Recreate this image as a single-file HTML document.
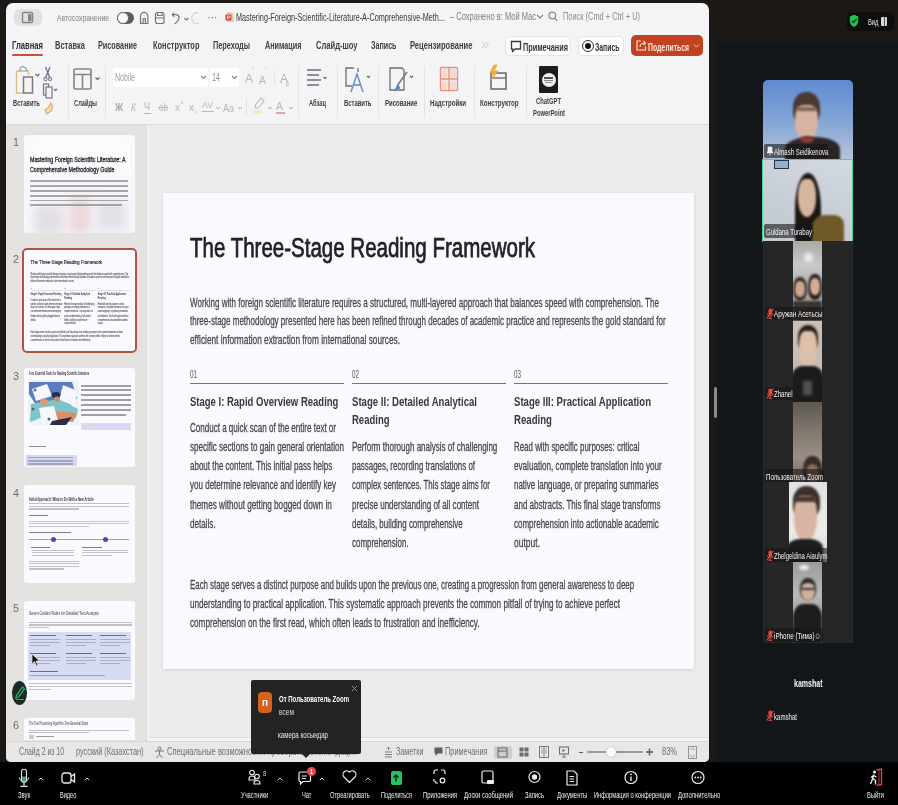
<!DOCTYPE html>
<html><head><meta charset="utf-8"><style>
*{margin:0;padding:0;box-sizing:border-box}
html,body{width:898px;height:805px;overflow:hidden;background:#14171a;font-family:"Liberation Sans",sans-serif}
.a{position:absolute}
.t{position:absolute;white-space:nowrap;transform-origin:0 0;line-height:normal}
</style></head><body>
<div class="a" style="left:0px;top:0px;width:898px;height:42px;background:#1b1815;"></div>
<div class="a" style="left:0px;top:0px;width:717px;height:762px;background:#1b1815;"></div>
<div class="a" style="left:6px;top:3px;width:703px;height:759px;background:#f4f3f5;border-radius:7px 7px 5px 5px"></div>
<div class="a" style="left:713.5px;top:387px;width:3px;height:31px;background:#8b8a88;border-radius:1.5px"></div>
<div class="a" style="left:847px;top:12px;width:47px;height:19px;background:#0e0e0e;border-radius:5px"></div>
<svg class="a" style="left:849px;top:14px;" width="10" height="14" viewBox="0 0 10 14" fill="none"><path d="M5 0.8 L9.2 2.5 V7 C9.2 10 7.2 12 5 13 C2.8 12 0.8 10 0.8 7 V2.5 Z" fill="#23c552"/><path d="M2.8 6.8 L4.5 8.5 L7.5 5" stroke="#0b3d18" stroke-width="1.3"/></svg>
<div class="t" style="left:867.50px;top:16.40px;font-size:9.5px;color:#e6e6e6;transform:scaleX(0.6109);">Вид</div>
<div class="a" style="left:881px;top:17px;width:6px;height:9px;background:#d8d8d8;border-radius:1px"></div>
<div class="a" style="left:883.5px;top:17px;width:1px;height:9px;background:#555;"></div>
<div class="a" style="left:14px;top:9px;width:28px;height:17px;background:#e1e0e2;border-radius:6px"></div>
<svg class="a" style="left:21px;top:11px;" width="14" height="13" viewBox="0 0 14 13" fill="none"><rect x="1.5" y="1.5" width="10" height="10" rx="1" stroke="#838285" stroke-width="1.4"/><rect x="7" y="3" width="3.5" height="7" fill="#838285"/></svg>
<div class="t" style="left:57.00px;top:12.40px;font-size:9.5px;color:#807f82;transform:scaleX(0.7180);">Автосохранение</div>
<div class="a" style="left:117px;top:12px;width:17px;height:11.5px;background:#5d5c5f;border-radius:6px"></div>
<div class="a" style="left:116.5px;top:11.5px;width:12px;height:12px;background:#fbfbfb;border-radius:50%;border:1.2px solid #6a696c"></div>
<svg class="a" style="left:138px;top:9px;" width="80" height="18" viewBox="0 0 80 18" fill="none"><g stroke="#77767a" stroke-width="1.2" fill="none"><path d="M2.5 14.5 V7.5 A3.7 4.2 0 0 1 9.9 7.5 V14.5 Z"/><path d="M5 14.5 V10.5 A1.2 1.2 0 0 1 7.4 10.5 V14.5"/><rect x="17.5" y="3.5" width="8.5" height="11" rx="2"/><path d="M19.5 3.5 V6.5 H24 V3.5 M17.5 9 H26"/><path d="M34 6 L36 3.5 M34 6 L36.5 7.5 M34.2 6 C38 4.5 41.5 6 41 9.5 C40.6 12 38.5 13.5 36.5 15"/><path d="M46.5 9 L48.5 11 L50.5 9" stroke-width="1.1"/><path d="M60.5 4 A5 5.5 0 1 0 61 14" stroke="#d4d3d6"/></g><circle cx="71" cy="8.8" r=".7" fill="#77767a"/><circle cx="74.3" cy="8.8" r=".7" fill="#77767a"/><circle cx="77.6" cy="8.8" r=".7" fill="#77767a"/></svg>
<svg class="a" style="left:225px;top:11px;" width="10" height="12" viewBox="0 0 10 12" fill="none"><path d="M2 1 H6.5 L9 3.5 V11 H2 Z" fill="#f0c7bd"/><rect x="0.5" y="3.5" width="6" height="6" rx="1" fill="#d1492d"/><path d="M2.5 8 V5 H4.3 A1 1 0 0 1 4.3 7 H2.5" stroke="#fff" stroke-width=".8"/></svg>
<div class="t" style="left:236.00px;top:11.00px;font-size:10.5px;color:#38373a;transform:scaleX(0.6927);">Mastering-Foreign-Scientific-Literature-A-Comprehensive-Meth...</div>
<div class="t" style="left:450.00px;top:11.45px;font-size:10px;color:#7f7e81;transform:scaleX(0.7529);">– Сохранено в: Мой Mac</div>
<svg class="a" style="left:536px;top:13px;" width="8" height="7" viewBox="0 0 8 7" fill="none"><path d="M1 2 L4 5 L7 2" stroke="#7f7e81" stroke-width="1.1"/></svg>
<svg class="a" style="left:548px;top:11px;" width="10" height="11" viewBox="0 0 10 11" fill="none"><circle cx="4.3" cy="4.5" r="3.4" stroke="#8e8d90" stroke-width="1.2"/><path d="M6.8 7 L9.2 9.8" stroke="#8e8d90" stroke-width="1.2"/></svg>
<div class="t" style="left:563.00px;top:11.45px;font-size:10px;color:#8e8d90;transform:scaleX(0.7416);">Поиск (Cmd + Ctrl + U)</div>
<div class="t" style="left:12.00px;top:38.55px;font-size:11px;color:#2e2d30;font-weight:bold;transform:scaleX(0.6927);">Главная</div>
<div class="t" style="left:55.00px;top:38.55px;font-size:11px;color:#3f3e41;font-weight:bold;transform:scaleX(0.6825);">Вставка</div>
<div class="t" style="left:98.00px;top:38.55px;font-size:11px;color:#3f3e41;font-weight:bold;transform:scaleX(0.6587);">Рисование</div>
<div class="t" style="left:152.50px;top:38.55px;font-size:11px;color:#3f3e41;font-weight:bold;transform:scaleX(0.6791);">Конструктор</div>
<div class="t" style="left:213.00px;top:38.55px;font-size:11px;color:#3f3e41;font-weight:bold;transform:scaleX(0.6665);">Переходы</div>
<div class="t" style="left:264.70px;top:38.55px;font-size:11px;color:#3f3e41;font-weight:bold;transform:scaleX(0.6588);">Анимация</div>
<div class="t" style="left:315.50px;top:38.55px;font-size:11px;color:#3f3e41;font-weight:bold;transform:scaleX(0.6879);">Слайд-шоу</div>
<div class="t" style="left:371.00px;top:38.55px;font-size:11px;color:#3f3e41;font-weight:bold;transform:scaleX(0.6489);">Запись</div>
<div class="t" style="left:410.00px;top:38.55px;font-size:11px;color:#3f3e41;font-weight:bold;transform:scaleX(0.6895);">Рецензирование</div>
<div class="a" style="left:12px;top:53.5px;width:31px;height:2.5px;background:#c4553b;border-radius:1px"></div>
<svg class="a" style="left:481px;top:41px;" width="8" height="8" viewBox="0 0 8 8" fill="none"><path d="M1 1 L4 4 L1 7 M4.5 1 L7.5 4 L4.5 7" stroke="#c2c1c4" stroke-width="1"/></svg>
<div class="a" style="left:505px;top:36px;width:66px;height:20px;background:#fdfdfd;border-radius:5px;border:1px solid #e4e3e5"></div>
<svg class="a" style="left:510px;top:40px;" width="12" height="13" viewBox="0 0 12 13" fill="none"><path d="M1.5 1.5 H10.5 V9 H5 L2.5 11.5 V9 H1.5 Z" stroke="#3b3a3d" stroke-width="1.3"/></svg>
<div class="t" style="left:522.50px;top:40.50px;font-size:10.5px;color:#333235;font-weight:bold;transform:scaleX(0.6963);">Примечания</div>
<div class="a" style="left:578px;top:36px;width:46px;height:20px;background:#fdfdfd;border-radius:5px;border:1px solid #e4e3e5"></div>
<div class="a" style="left:582px;top:40px;width:12px;height:12px;background:#fdfdfd;border-radius:50%;border:1.3px solid #333"></div>
<div class="a" style="left:585px;top:43px;width:6px;height:6px;background:#111;border-radius:50%"></div>
<div class="t" style="left:595.00px;top:40.50px;font-size:10.5px;color:#333235;font-weight:bold;transform:scaleX(0.6531);">Запись</div>
<div class="a" style="left:631px;top:35px;width:72px;height:21px;background:#c2411f;border-radius:5px"></div>
<svg class="a" style="left:635px;top:39px;" width="13" height="13" viewBox="0 0 13 13" fill="none"><path d="M6 2 H2 V11 H10.5 V7.5" stroke="#fbe1da" stroke-width="1.2"/><path d="M5 8 C5 5 7 4 10.5 4 M8.5 2 L10.5 4 L8.5 6" stroke="#fbe1da" stroke-width="1.2"/></svg>
<div class="t" style="left:648.00px;top:40.50px;font-size:10.5px;color:#fbe6e0;font-weight:bold;transform:scaleX(0.6506);">Поделиться</div>
<svg class="a" style="left:693px;top:43px;" width="7" height="6" viewBox="0 0 7 6" fill="none"><path d="M1 1.5 L3.5 4 L6 1.5" stroke="#f2c4b8" stroke-width="1"/></svg>
<div class="a" style="left:67.5px;top:66px;width:1px;height:52px;background:#e3e2e4;"></div>
<div class="a" style="left:104.5px;top:66px;width:1px;height:52px;background:#e3e2e4;"></div>
<div class="a" style="left:298px;top:66px;width:1px;height:52px;background:#e3e2e4;"></div>
<div class="a" style="left:337px;top:66px;width:1px;height:52px;background:#e3e2e4;"></div>
<div class="a" style="left:378px;top:66px;width:1px;height:52px;background:#e3e2e4;"></div>
<div class="a" style="left:424px;top:66px;width:1px;height:52px;background:#e3e2e4;"></div>
<div class="a" style="left:474px;top:66px;width:1px;height:52px;background:#e3e2e4;"></div>
<div class="a" style="left:526px;top:66px;width:1px;height:52px;background:#e3e2e4;"></div>
<div class="a" style="left:6px;top:124px;width:703px;height:1px;background:#dcdadc;"></div>
<svg class="a" style="left:14px;top:65px;" width="44" height="52" viewBox="0 0 44 52" fill="none"><path d="M2.5 6 H6.5 M12.5 6 H14.5 V10" stroke="#dcbc84" stroke-width="1.3"/><path d="M2.5 6 V28 H9" stroke="#dcbc84" stroke-width="1.3"/><path d="M6 6 V3.5 C6.5 1.5 9.5 1 10.5 2.5 L12.5 3.5 V6 Z" stroke="#9a9a9c" stroke-width="1.1"/><rect x="9.5" y="12" width="9" height="16" stroke="#7a797c" stroke-width="1.5"/><path d="M21.5 9 L23.5 11 L25.5 9" stroke="#666" stroke-width="1.1"/><path d="M31.5 2 L36 13 M36 2 L31.5 13" stroke="#5d6f88" stroke-width="1.2"/><circle cx="31.5" cy="14" r="1.6" stroke="#6c87a8" stroke-width="1.1"/><circle cx="36" cy="14" r="1.6" stroke="#6c87a8" stroke-width="1.1"/><rect x="29.5" y="19" width="5" height="11" stroke="#77767a" stroke-width="1.2"/><rect x="32" y="22" width="6" height="11" fill="#f4f3f5" stroke="#77767a" stroke-width="1.2"/><path d="M40 24 L41.5 25.5 L43 24" stroke="#666" stroke-width="1.1"/><path d="M37 38 L34 43 L31 45 L33 49 L37.5 45.5 L38.5 41 Z" stroke="#e4a15a" fill="#f6dcbb" stroke-width="1.1"/></svg>
<div class="t" style="left:12.50px;top:97.86px;font-size:9px;color:#3d3c3f;font-weight:bold;transform:scaleX(0.6390);">Вставить</div>
<svg class="a" style="left:73px;top:68px;" width="30" height="24" viewBox="0 0 30 24" fill="none"><rect x="1" y="1" width="17" height="20" rx="1" stroke="#858487" stroke-width="1.6"/><path d="M1 6.5 H18 M9.5 6.5 V21" stroke="#858487" stroke-width="1.6"/><path d="M22.5 9.5 L24.5 11.5 L26.5 9.5" stroke="#666" stroke-width="1.2"/></svg>
<div class="t" style="left:74.30px;top:97.86px;font-size:9px;color:#3d3c3f;font-weight:bold;transform:scaleX(0.6361);">Слайды</div>
<div class="a" style="left:112.5px;top:67.5px;width:95.5px;height:19.5px;background:#fff;border-radius:3px"></div>
<div class="t" style="left:115.00px;top:71.95px;font-size:10px;color:#9c9b9e;transform:scaleX(0.7052);">Nobile</div>
<svg class="a" style="left:200px;top:75px;" width="7" height="5" viewBox="0 0 7 5" fill="none"><path d="M1 1 L3.5 3.5 L6 1" stroke="#858487" stroke-width="1.1"/></svg>
<div class="a" style="left:209.5px;top:67.5px;width:29.5px;height:19.5px;background:#fff;border-radius:3px"></div>
<div class="t" style="left:212.00px;top:71.95px;font-size:10px;color:#8c8b8e;transform:scaleX(0.7191);">14</div>
<svg class="a" style="left:231px;top:75px;" width="7" height="5" viewBox="0 0 7 5" fill="none"><path d="M1 1 L3.5 3.5 L6 1" stroke="#858487" stroke-width="1.1"/></svg>
<div class="t" style="left:244.50px;top:72.14px;font-size:12px;color:#b8b7ba;transform:scaleX(0.9981);">A</div>
<div class="t" style="left:252.00px;top:66.67px;font-size:7px;color:#b8b7ba;">ˆ</div>
<div class="t" style="left:258.50px;top:73.50px;font-size:10.5px;color:#b8b7ba;transform:scaleX(0.9978);">A</div>
<div class="t" style="left:265.00px;top:66.67px;font-size:7px;color:#b8b7ba;">ˇ</div>
<div class="a" style="left:273.5px;top:70px;width:1px;height:15px;background:#e2e1e3;"></div>
<div class="t" style="left:280.00px;top:71.23px;font-size:13px;color:#b8b7ba;transform:scaleX(0.9225);">A</div>
<div class="t" style="left:286.00px;top:77.76px;font-size:8px;color:#b8b7ba;">ᵦ</div>
<div class="t" style="left:115.00px;top:100.59px;font-size:11.5px;color:#a9a8ab;font-weight:bold;transform:scaleX(0.7688);">Ж</div>
<div class="t" style="left:131.00px;top:101.05px;font-size:11px;color:#b8b7ba;font-style:italic;transform:scaleX(0.7711);">К</div>
<div class="t" style="left:144.00px;top:100.05px;font-size:11px;color:#b8b7ba;transform:scaleX(0.8170);">Ч</div>
<div class="a" style="left:144px;top:113px;width:7px;height:1px;background:#b8b7ba;"></div>
<div class="t" style="left:158.50px;top:101.95px;font-size:10px;color:#b8b7ba;transform:scaleX(0.8090);">ab</div>
<div class="a" style="left:158px;top:107px;width:10px;height:1px;background:#b8b7ba;"></div>
<div class="t" style="left:175.00px;top:101.05px;font-size:11px;color:#b8b7ba;transform:scaleX(0.9091);">x</div>
<div class="t" style="left:180.50px;top:98.67px;font-size:7px;color:#b8b7ba;">²</div>
<div class="t" style="left:189.00px;top:101.05px;font-size:11px;color:#b8b7ba;transform:scaleX(0.9091);">x</div>
<div class="t" style="left:194.50px;top:106.67px;font-size:7px;color:#b8b7ba;">₂</div>
<div class="t" style="left:202.00px;top:99.86px;font-size:9px;color:#b8b7ba;transform:scaleX(0.9697);">AV</div>
<div class="a" style="left:202px;top:111px;width:12px;height:1px;background:#b8b7ba;"></div>
<svg class="a" style="left:215px;top:106px;" width="6" height="5" viewBox="0 0 6 5" fill="none"><path d="M1 1 L3 3 L5 1" stroke="#b0afb2" stroke-width="1"/></svg>
<div class="t" style="left:223.00px;top:101.50px;font-size:10.5px;color:#b8b7ba;transform:scaleX(0.8564);">Aa</div>
<svg class="a" style="left:236.5px;top:106px;" width="6" height="5" viewBox="0 0 6 5" fill="none"><path d="M1 1 L3 3 L5 1" stroke="#b0afb2" stroke-width="1"/></svg>
<div class="a" style="left:246px;top:98px;width:1px;height:17px;background:#e2e1e3;"></div>
<svg class="a" style="left:252px;top:96px;" width="14" height="19" viewBox="0 0 14 19" fill="none"><path d="M1 16 H10" stroke="#f1efa6" stroke-width="3"/><path d="M9 2 L12 5 L6.5 12 L3.5 12 L3.5 9 Z" stroke="#bcbbbe" stroke-width="1.1"/></svg>
<svg class="a" style="left:266.5px;top:106px;" width="6" height="5" viewBox="0 0 6 5" fill="none"><path d="M1 1 L3 3 L5 1" stroke="#b0afb2" stroke-width="1"/></svg>
<div class="t" style="left:276.00px;top:100.05px;font-size:11px;color:#b8b7ba;transform:scaleX(0.9532);">A</div>
<div class="a" style="left:275.5px;top:112px;width:9px;height:2px;background:#e7a2a7;"></div>
<svg class="a" style="left:287.5px;top:106px;" width="6" height="5" viewBox="0 0 6 5" fill="none"><path d="M1 1 L3 3 L5 1" stroke="#b0afb2" stroke-width="1"/></svg>
<svg class="a" style="left:305px;top:67px;" width="22" height="24" viewBox="0 0 22 24" fill="none"><path d="M2 3 H16 M2 8 H14 M2 13 H16 M2 18 H14" stroke="#6f6e71" stroke-width="1.4"/><path d="M18.5 10 L20 11.5 L21.5 10" stroke="#666" stroke-width="1.1"/></svg>
<div class="t" style="left:309.00px;top:97.86px;font-size:9px;color:#3d3c3f;font-weight:bold;transform:scaleX(0.6363);">Абзац</div>
<svg class="a" style="left:344px;top:66px;" width="30" height="28" viewBox="0 0 30 28" fill="none"><path d="M10 2 H2 V20 H8" stroke="#6f6e71" stroke-width="1.3"/><path d="M14 2 V6" stroke="#6f6e71" stroke-width="1.3"/><path d="M7 26 L13 8 L19 26 M9.5 19 H16.5" stroke="#5a87c8" stroke-width="1.3"/><path d="M23 10 L24.5 11.5 L26 10" stroke="#666" stroke-width="1.1"/></svg>
<div class="t" style="left:343.50px;top:97.86px;font-size:9px;color:#3d3c3f;font-weight:bold;transform:scaleX(0.6534);">Вставить</div>
<svg class="a" style="left:388px;top:66px;" width="32" height="28" viewBox="0 0 32 28" fill="none"><path d="M2 2 H14 L16 4 V24 H2 Z" stroke="#6f6e71" stroke-width="1.3"/><path d="M19 6 L9 20" stroke="#7a797c" stroke-width="1.6"/><path d="M10 19 L6 25 L12 22 Z" fill="#5a87c8" stroke="#5a87c8"/><path d="M22 10 L23.5 11.5 L25 10" stroke="#666" stroke-width="1.1"/></svg>
<div class="t" style="left:384.60px;top:97.86px;font-size:9px;color:#3d3c3f;font-weight:bold;transform:scaleX(0.6689);">Рисование</div>
<svg class="a" style="left:439px;top:66px;" width="20" height="26" viewBox="0 0 20 26" fill="none"><rect x="1.5" y="1.5" width="17" height="23" rx="1" stroke="#e3927c" stroke-width="1.4"/><path d="M10 1.5 V24.5 M1.5 13 H18.5" stroke="#e3927c" stroke-width="1.4"/><rect x="3" y="3" width="5.5" height="8.5" fill="#f8d9cf"/><rect x="11.5" y="3" width="5.5" height="8.5" fill="#f8d9cf"/><rect x="3" y="14.5" width="5.5" height="8.5" fill="#f8d9cf"/><rect x="11.5" y="14.5" width="5.5" height="8.5" fill="#f8d9cf"/></svg>
<div class="t" style="left:430.30px;top:97.86px;font-size:9px;color:#3d3c3f;font-weight:bold;transform:scaleX(0.6782);">Надстройки</div>
<svg class="a" style="left:487px;top:64px;" width="22" height="28" viewBox="0 0 22 28" fill="none"><rect x="4" y="9" width="15" height="16" stroke="#6e6d70" stroke-width="1.6"/><path d="M4 14 H19" stroke="#6e6d70" stroke-width="1.4"/><path d="M7 1 L3 9 H7 L4 16 L11 7 H7 L10 1 Z" fill="#f1b642" stroke="#e9a62a" stroke-width=".8"/></svg>
<div class="t" style="left:480.40px;top:97.86px;font-size:9px;color:#3d3c3f;font-weight:bold;transform:scaleX(0.6873);">Конструктор</div>
<div class="a" style="left:539px;top:66px;width:19px;height:27px;background:#1c1c1c;border-radius:1px"></div>
<div class="a" style="left:541.5px;top:72.5px;width:14px;height:14px;background:#f0f0f0;border-radius:50%"></div>
<div class="a" style="left:544px;top:77px;width:9px;height:1.5px;background:#555;"></div>
<div class="a" style="left:544px;top:79.5px;width:9px;height:1.5px;background:#888;"></div>
<div class="a" style="left:545px;top:82px;width:7px;height:1px;background:#999;"></div>
<div class="t" style="left:536.00px;top:96.36px;font-size:9px;color:#3d3c3f;font-weight:bold;transform:scaleX(0.6491);">ChatGPT</div>
<div class="t" style="left:532.60px;top:107.86px;font-size:9px;color:#3d3c3f;font-weight:bold;transform:scaleX(0.6463);">PowerPoint</div>
<div class="a" style="left:6px;top:125px;width:140px;height:616px;background:#e5e3e2;"></div>
<div class="a" style="left:146px;top:125px;width:3px;height:616px;background:#f3f2f2;border-left:1px solid #dcdada"></div>
<div class="a" style="left:149px;top:125px;width:560px;height:616px;background:#ececec;"></div>
<div class="a" style="left:149px;top:736.5px;width:560px;height:4.5px;background:#f6f5f5;border-top:1px solid #dddcdc"></div>
<!--SLIDE-->
<div class="a" style="left:163px;top:193px;width:531px;height:476px;background:#faf9fd;box-shadow:0 1px 3px rgba(0,0,0,.13)"></div>
<div class="t" style="left:190.00px;top:233.17px;font-size:27px;color:#232326;-webkit-text-stroke:.75px #232326;transform:scaleX(0.7595);">The Three-Stage Reading Framework</div>
<div class="t" style="left:189.50px;top:294.57px;font-size:13.4px;color:#48484b;-webkit-text-stroke:.3px #48484b;transform:scaleX(0.6022);">Working with foreign scientific literature requires a structured, multi-layered approach that balances speed with comprehension. The</div>
<div class="t" style="left:189.50px;top:313.17px;font-size:13.4px;color:#48484b;-webkit-text-stroke:.3px #48484b;transform:scaleX(0.5982);">three-stage methodology presented here has been refined through decades of academic practice and represents the gold standard for</div>
<div class="t" style="left:189.50px;top:331.77px;font-size:13.4px;color:#48484b;-webkit-text-stroke:.3px #48484b;transform:scaleX(0.6192);">efficient information extraction from international sources.</div>
<div class="t" style="left:189.60px;top:368.10px;font-size:10.5px;color:#555558;transform:scaleX(0.5989);">01</div>
<div class="a" style="left:189.6px;top:382.5px;width:154px;height:1.6px;background:#6076b2;"></div>
<div class="t" style="left:351.70px;top:368.10px;font-size:10.5px;color:#555558;transform:scaleX(0.5989);">02</div>
<div class="a" style="left:351.7px;top:382.5px;width:154px;height:1.6px;background:#6076b2;"></div>
<div class="t" style="left:513.70px;top:368.10px;font-size:10.5px;color:#555558;transform:scaleX(0.5989);">03</div>
<div class="a" style="left:513.7px;top:382.5px;width:154px;height:1.6px;background:#6076b2;"></div>
<div class="t" style="left:189.60px;top:393.78px;font-size:13.5px;color:#3a3a3d;font-weight:bold;transform:scaleX(0.7039);">Stage I: Rapid Overview Reading</div>
<div class="t" style="left:351.70px;top:393.78px;font-size:13.5px;color:#3a3a3d;font-weight:bold;transform:scaleX(0.7110);">Stage II: Detailed Analytical</div>
<div class="t" style="left:351.70px;top:412.28px;font-size:13.5px;color:#3a3a3d;font-weight:bold;transform:scaleX(0.7040);">Reading</div>
<div class="t" style="left:513.70px;top:393.78px;font-size:13.5px;color:#3a3a3d;font-weight:bold;transform:scaleX(0.7096);">Stage III: Practical Application</div>
<div class="t" style="left:513.70px;top:412.28px;font-size:13.5px;color:#3a3a3d;font-weight:bold;transform:scaleX(0.7134);">Reading</div>
<div class="t" style="left:189.60px;top:420.71px;font-size:12.7px;color:#48484b;-webkit-text-stroke:.3px #48484b;transform:scaleX(0.6331);">Conduct a quick scan of the entire text or</div>
<div class="t" style="left:189.60px;top:439.96px;font-size:12.7px;color:#48484b;-webkit-text-stroke:.3px #48484b;transform:scaleX(0.6347);">specific sections to gain general orientation</div>
<div class="t" style="left:189.60px;top:459.21px;font-size:12.7px;color:#48484b;-webkit-text-stroke:.3px #48484b;transform:scaleX(0.6311);">about the content. This initial pass helps</div>
<div class="t" style="left:189.60px;top:478.46px;font-size:12.7px;color:#48484b;-webkit-text-stroke:.3px #48484b;transform:scaleX(0.6331);">you determine relevance and identify key</div>
<div class="t" style="left:189.60px;top:497.71px;font-size:12.7px;color:#48484b;-webkit-text-stroke:.3px #48484b;transform:scaleX(0.6443);">themes without getting bogged down in</div>
<div class="t" style="left:189.60px;top:516.96px;font-size:12.7px;color:#48484b;-webkit-text-stroke:.3px #48484b;transform:scaleX(0.6318);">details.</div>
<div class="t" style="left:351.70px;top:439.91px;font-size:12.7px;color:#48484b;-webkit-text-stroke:.3px #48484b;transform:scaleX(0.6320);">Perform thorough analysis of challenging</div>
<div class="t" style="left:351.70px;top:459.16px;font-size:12.7px;color:#48484b;-webkit-text-stroke:.3px #48484b;transform:scaleX(0.6251);">passages, recording translations of</div>
<div class="t" style="left:351.70px;top:478.41px;font-size:12.7px;color:#48484b;-webkit-text-stroke:.3px #48484b;transform:scaleX(0.6199);">complex sentences. This stage aims for</div>
<div class="t" style="left:351.70px;top:497.66px;font-size:12.7px;color:#48484b;-webkit-text-stroke:.3px #48484b;transform:scaleX(0.6340);">precise understanding of all content</div>
<div class="t" style="left:351.70px;top:516.91px;font-size:12.7px;color:#48484b;-webkit-text-stroke:.3px #48484b;transform:scaleX(0.6253);">details, building comprehensive</div>
<div class="t" style="left:351.70px;top:536.16px;font-size:12.7px;color:#48484b;-webkit-text-stroke:.3px #48484b;transform:scaleX(0.6269);">comprehension.</div>
<div class="t" style="left:513.70px;top:439.91px;font-size:12.7px;color:#48484b;-webkit-text-stroke:.3px #48484b;transform:scaleX(0.6240);">Read with specific purposes: critical</div>
<div class="t" style="left:513.70px;top:459.16px;font-size:12.7px;color:#48484b;-webkit-text-stroke:.3px #48484b;transform:scaleX(0.6409);">evaluation, complete translation into your</div>
<div class="t" style="left:513.70px;top:478.41px;font-size:12.7px;color:#48484b;-webkit-text-stroke:.3px #48484b;transform:scaleX(0.6270);">native language, or preparing summaries</div>
<div class="t" style="left:513.70px;top:497.66px;font-size:12.7px;color:#48484b;-webkit-text-stroke:.3px #48484b;transform:scaleX(0.6321);">and abstracts. This final stage transforms</div>
<div class="t" style="left:513.70px;top:516.91px;font-size:12.7px;color:#48484b;-webkit-text-stroke:.3px #48484b;transform:scaleX(0.6297);">comprehension into actionable academic</div>
<div class="t" style="left:513.70px;top:536.16px;font-size:12.7px;color:#48484b;-webkit-text-stroke:.3px #48484b;transform:scaleX(0.6699);">output.</div>
<div class="t" style="left:189.50px;top:576.57px;font-size:13.4px;color:#48484b;-webkit-text-stroke:.3px #48484b;transform:scaleX(0.5877);">Each stage serves a distinct purpose and builds upon the previous one, creating a progression from general awareness to deep</div>
<div class="t" style="left:189.50px;top:595.57px;font-size:13.4px;color:#48484b;-webkit-text-stroke:.3px #48484b;transform:scaleX(0.6070);">understanding to practical application. This systematic approach prevents the common pitfall of trying to achieve perfect</div>
<div class="t" style="left:189.50px;top:614.57px;font-size:13.4px;color:#48484b;-webkit-text-stroke:.3px #48484b;transform:scaleX(0.6085);">comprehension on the first read, which often leads to frustration and inefficiency.</div>
<!--/SLIDE-->
<div class="t" style="left:12.50px;top:135.54px;font-size:11px;color:#6e6d70;transform:scaleX(0.9796);">1</div>
<div class="t" style="left:12.50px;top:252.54px;font-size:11px;color:#6e6d70;transform:scaleX(0.9796);">2</div>
<div class="t" style="left:12.50px;top:369.55px;font-size:11px;color:#6e6d70;transform:scaleX(0.9796);">3</div>
<div class="t" style="left:12.50px;top:486.55px;font-size:11px;color:#6e6d70;transform:scaleX(0.9796);">4</div>
<div class="t" style="left:12.50px;top:602.25px;font-size:11px;color:#6e6d70;transform:scaleX(0.9796);">5</div>
<div class="t" style="left:12.50px;top:719.14px;font-size:11px;color:#6e6d70;transform:scaleX(0.9796);">6</div>
<div class="a" style="left:24.3px;top:135px;width:110.6px;height:98px;background:#f7f6fa;border-radius:3px"></div>
<div class="a" style="left:24.3px;top:135px;width:110.6px;height:98px;border-radius:3px;overflow:hidden"><div class="a" style="left:10px;top:70px;width:30px;height:30px;background:#e3dfe6;filter:blur(5px)"></div><div class="a" style="left:45px;top:62px;width:22px;height:36px;background:#ead7db;filter:blur(5px)"></div><div class="a" style="left:72px;top:66px;width:30px;height:30px;background:#e2e3ea;filter:blur(5px)"></div><div class="a" style="left:0px;top:0px;width:110px;height:40px;background:#fbfbfd;filter:blur(6px)"></div></div>
<div class="t" style="left:30.00px;top:156.35px;font-size:6.8px;color:#2a2a2e;-webkit-text-stroke:.3px #2a2a2e;transform:scaleX(0.7802);">Mastering Foreign Scientific Literature: A</div>
<div class="t" style="left:30.00px;top:165.85px;font-size:6.8px;color:#2a2a2e;-webkit-text-stroke:.3px #2a2a2e;transform:scaleX(0.7793);">Comprehensive Methodology Guide</div>
<div class="a" style="left:30px;top:180.4px;width:98px;height:1.8px;background:#8e8d93;filter:blur(.45px);opacity:.75"></div>
<div class="a" style="left:30px;top:185.18px;width:98px;height:1.8px;background:#8e8d93;filter:blur(.45px);opacity:.75"></div>
<div class="a" style="left:30px;top:189.96px;width:98px;height:1.8px;background:#8e8d93;filter:blur(.45px);opacity:.75"></div>
<div class="a" style="left:30px;top:194.74px;width:98px;height:1.8px;background:#8e8d93;filter:blur(.45px);opacity:.75"></div>
<div class="a" style="left:30px;top:199.52px;width:98px;height:1.8px;background:#8e8d93;filter:blur(.45px);opacity:.75"></div>
<div class="a" style="left:30px;top:204.3px;width:92px;height:1.8px;background:#8e8d93;filter:blur(.45px);opacity:.75"></div>
<div class="a" style="left:22px;top:248px;width:115px;height:105px;background:#faf9fd;border-radius:5px;border:2.5px solid #ab553f"></div>
<div class="a" style="left:24.5px;top:250.5px;width:531px;height:476px;transform:scale(.2075);transform-origin:0 0;overflow:hidden">
<div class="a" style="left:0.00px;top:0.00px;width:531px;height:476px;background:#faf9fd;box-shadow:0 1px 3px rgba(0,0,0,.13)"></div>
<div class="t" style="left:27.00px;top:40.17px;font-size:27px;color:#232326;-webkit-text-stroke:.75px #232326;transform:scaleX(0.7595);">The Three-Stage Reading Framework</div>
<div class="t" style="left:26.50px;top:101.57px;font-size:13.4px;color:#48484b;-webkit-text-stroke:.3px #48484b;transform:scaleX(0.6022);">Working with foreign scientific literature requires a structured, multi-layered approach that balances speed with comprehension. The</div>
<div class="t" style="left:26.50px;top:120.17px;font-size:13.4px;color:#48484b;-webkit-text-stroke:.3px #48484b;transform:scaleX(0.5982);">three-stage methodology presented here has been refined through decades of academic practice and represents the gold standard for</div>
<div class="t" style="left:26.50px;top:138.77px;font-size:13.4px;color:#48484b;-webkit-text-stroke:.3px #48484b;transform:scaleX(0.6192);">efficient information extraction from international sources.</div>
<div class="t" style="left:26.60px;top:175.10px;font-size:10.5px;color:#555558;transform:scaleX(0.5989);">01</div>
<div class="a" style="left:26.60px;top:189.50px;width:154px;height:1.6px;background:#6076b2;"></div>
<div class="t" style="left:188.70px;top:175.10px;font-size:10.5px;color:#555558;transform:scaleX(0.5989);">02</div>
<div class="a" style="left:188.70px;top:189.50px;width:154px;height:1.6px;background:#6076b2;"></div>
<div class="t" style="left:350.70px;top:175.10px;font-size:10.5px;color:#555558;transform:scaleX(0.5989);">03</div>
<div class="a" style="left:350.70px;top:189.50px;width:154px;height:1.6px;background:#6076b2;"></div>
<div class="t" style="left:26.60px;top:200.78px;font-size:13.5px;color:#3a3a3d;font-weight:bold;transform:scaleX(0.7039);">Stage I: Rapid Overview Reading</div>
<div class="t" style="left:188.70px;top:200.78px;font-size:13.5px;color:#3a3a3d;font-weight:bold;transform:scaleX(0.7110);">Stage II: Detailed Analytical</div>
<div class="t" style="left:188.70px;top:219.28px;font-size:13.5px;color:#3a3a3d;font-weight:bold;transform:scaleX(0.7040);">Reading</div>
<div class="t" style="left:350.70px;top:200.78px;font-size:13.5px;color:#3a3a3d;font-weight:bold;transform:scaleX(0.7096);">Stage III: Practical Application</div>
<div class="t" style="left:350.70px;top:219.28px;font-size:13.5px;color:#3a3a3d;font-weight:bold;transform:scaleX(0.7134);">Reading</div>
<div class="t" style="left:26.60px;top:227.71px;font-size:12.7px;color:#48484b;-webkit-text-stroke:.3px #48484b;transform:scaleX(0.6331);">Conduct a quick scan of the entire text or</div>
<div class="t" style="left:26.60px;top:246.96px;font-size:12.7px;color:#48484b;-webkit-text-stroke:.3px #48484b;transform:scaleX(0.6347);">specific sections to gain general orientation</div>
<div class="t" style="left:26.60px;top:266.21px;font-size:12.7px;color:#48484b;-webkit-text-stroke:.3px #48484b;transform:scaleX(0.6311);">about the content. This initial pass helps</div>
<div class="t" style="left:26.60px;top:285.46px;font-size:12.7px;color:#48484b;-webkit-text-stroke:.3px #48484b;transform:scaleX(0.6331);">you determine relevance and identify key</div>
<div class="t" style="left:26.60px;top:304.71px;font-size:12.7px;color:#48484b;-webkit-text-stroke:.3px #48484b;transform:scaleX(0.6443);">themes without getting bogged down in</div>
<div class="t" style="left:26.60px;top:323.96px;font-size:12.7px;color:#48484b;-webkit-text-stroke:.3px #48484b;transform:scaleX(0.6318);">details.</div>
<div class="t" style="left:188.70px;top:246.91px;font-size:12.7px;color:#48484b;-webkit-text-stroke:.3px #48484b;transform:scaleX(0.6320);">Perform thorough analysis of challenging</div>
<div class="t" style="left:188.70px;top:266.16px;font-size:12.7px;color:#48484b;-webkit-text-stroke:.3px #48484b;transform:scaleX(0.6251);">passages, recording translations of</div>
<div class="t" style="left:188.70px;top:285.41px;font-size:12.7px;color:#48484b;-webkit-text-stroke:.3px #48484b;transform:scaleX(0.6199);">complex sentences. This stage aims for</div>
<div class="t" style="left:188.70px;top:304.66px;font-size:12.7px;color:#48484b;-webkit-text-stroke:.3px #48484b;transform:scaleX(0.6340);">precise understanding of all content</div>
<div class="t" style="left:188.70px;top:323.91px;font-size:12.7px;color:#48484b;-webkit-text-stroke:.3px #48484b;transform:scaleX(0.6253);">details, building comprehensive</div>
<div class="t" style="left:188.70px;top:343.16px;font-size:12.7px;color:#48484b;-webkit-text-stroke:.3px #48484b;transform:scaleX(0.6269);">comprehension.</div>
<div class="t" style="left:350.70px;top:246.91px;font-size:12.7px;color:#48484b;-webkit-text-stroke:.3px #48484b;transform:scaleX(0.6240);">Read with specific purposes: critical</div>
<div class="t" style="left:350.70px;top:266.16px;font-size:12.7px;color:#48484b;-webkit-text-stroke:.3px #48484b;transform:scaleX(0.6409);">evaluation, complete translation into your</div>
<div class="t" style="left:350.70px;top:285.41px;font-size:12.7px;color:#48484b;-webkit-text-stroke:.3px #48484b;transform:scaleX(0.6270);">native language, or preparing summaries</div>
<div class="t" style="left:350.70px;top:304.66px;font-size:12.7px;color:#48484b;-webkit-text-stroke:.3px #48484b;transform:scaleX(0.6321);">and abstracts. This final stage transforms</div>
<div class="t" style="left:350.70px;top:323.91px;font-size:12.7px;color:#48484b;-webkit-text-stroke:.3px #48484b;transform:scaleX(0.6297);">comprehension into actionable academic</div>
<div class="t" style="left:350.70px;top:343.16px;font-size:12.7px;color:#48484b;-webkit-text-stroke:.3px #48484b;transform:scaleX(0.6699);">output.</div>
<div class="t" style="left:26.50px;top:383.57px;font-size:13.4px;color:#48484b;-webkit-text-stroke:.3px #48484b;transform:scaleX(0.5877);">Each stage serves a distinct purpose and builds upon the previous one, creating a progression from general awareness to deep</div>
<div class="t" style="left:26.50px;top:402.57px;font-size:13.4px;color:#48484b;-webkit-text-stroke:.3px #48484b;transform:scaleX(0.6070);">understanding to practical application. This systematic approach prevents the common pitfall of trying to achieve perfect</div>
<div class="t" style="left:26.50px;top:421.57px;font-size:13.4px;color:#48484b;-webkit-text-stroke:.3px #48484b;transform:scaleX(0.6085);">comprehension on the first read, which often leads to frustration and inefficiency.</div>
</div>
<div class="a" style="left:24px;top:368.3px;width:110.7px;height:98.3px;background:#faf9fd;border-radius:3px"></div>
<div class="t" style="left:28.50px;top:371.43px;font-size:4.5px;color:#3a3a3e;font-weight:bold;transform:scaleX(0.5250);">Four Essential Goals for Reading Scientific Literature</div>
<svg class="a" style="left:28px;top:379.8px;filter:blur(.5px)" width="51" height="45" viewBox="0 0 51 45" fill="none"><g><rect x="0" y="0" width="51" height="45" fill="#eef2f7"/><path d="M1 2 H44 L49 18 L41 28 L26 21 L10 28 L1 14 Z" fill="#5b7cbf"/><path d="M4 9 L19 4 L24 16 L8 21 Z" fill="#f4f7fb"/><path d="M35 5 L50 11 L46 26 L31 20 Z" fill="#f4f7fb"/><path d="M3 24 L30 19 L50 29 L48 38 L20 35 L2 42 Z" fill="#7fc4c6"/><path d="M25 31 L49 33 L45 42 L27 40 Z" fill="#d98f67"/><ellipse cx="16" cy="22" rx="4" ry="3.5" fill="#d99a72"/><path d="M11 28 L26 26 L30 41 L14 44 Z" fill="#f6f8fb"/><path d="M24 41 L44 37 L38 45 L22 45 Z" fill="#272d4a"/><ellipse cx="28" cy="15" rx="4.5" ry="3" fill="#263050"/><ellipse cx="29" cy="19" rx="3" ry="2.5" fill="#c98c6a"/><circle cx="7" cy="10" r="1.5" fill="#5b6fa5"/><circle cx="5" cy="29" r="1.5" fill="#4d6397"/><circle cx="21" cy="39" r="1.5" fill="#4d6397"/></g></svg>
<div class="a" style="left:80.8px;top:384.5px;width:50px;height:2.0px;background:#8a898f;filter:blur(.5px);opacity:.8"></div>
<div class="a" style="left:80.8px;top:389.4px;width:50px;height:2.0px;background:#8a898f;filter:blur(.5px);opacity:.8"></div>
<div class="a" style="left:80.8px;top:394.3px;width:50px;height:2.0px;background:#8a898f;filter:blur(.5px);opacity:.8"></div>
<div class="a" style="left:80.8px;top:399.2px;width:50px;height:2.0px;background:#8a898f;filter:blur(.5px);opacity:.8"></div>
<div class="a" style="left:80.8px;top:404.1px;width:50px;height:2.0px;background:#8a898f;filter:blur(.5px);opacity:.8"></div>
<div class="a" style="left:80.8px;top:409.0px;width:50px;height:2.0px;background:#8a898f;filter:blur(.5px);opacity:.8"></div>
<div class="a" style="left:80.8px;top:413.9px;width:45px;height:2.0px;background:#8a898f;filter:blur(.5px);opacity:.8"></div>
<div class="a" style="left:80.8px;top:423px;width:50.2px;height:6.8px;background:#dad9f4;"></div>
<div class="a" style="left:29px;top:445.5px;width:17px;height:1.2px;background:#8f8e94;"></div>
<div class="a" style="left:26px;top:455.2px;width:50.8px;height:11px;background:#d6d8f3;"></div>
<div class="a" style="left:27.5px;top:457.0px;width:45px;height:1.4px;background:#9a9ab8;filter:blur(.5px);opacity:.8"></div>
<div class="a" style="left:27.5px;top:460.2px;width:45px;height:1.4px;background:#9a9ab8;filter:blur(.5px);opacity:.8"></div>
<div class="a" style="left:27.5px;top:463.4px;width:45px;height:1.4px;background:#9a9ab8;filter:blur(.5px);opacity:.8"></div>
<div class="a" style="left:24.3px;top:484.9px;width:110.6px;height:98px;background:#faf9fd;border-radius:3px"></div>
<div class="t" style="left:28.50px;top:495.98px;font-size:5px;color:#3a3a3e;font-weight:bold;transform:scaleX(0.5769);">Initial Approach: What to Do With a New Article</div>
<div class="a" style="left:28.5px;top:503.0px;width:100px;height:1.4px;background:#b3b2b8;filter:blur(.5px);opacity:.8"></div>
<div class="a" style="left:28.5px;top:505.6px;width:100px;height:1.4px;background:#b3b2b8;filter:blur(.5px);opacity:.8"></div>
<div class="a" style="left:28.5px;top:508.2px;width:50px;height:1.4px;background:#b3b2b8;filter:blur(.5px);opacity:.8"></div>
<div class="a" style="left:28.5px;top:515px;width:19px;height:1.3px;background:#7d7c82;"></div>
<div class="a" style="left:28.5px;top:520.5px;width:100px;height:1.4px;background:#b9b8c8;filter:blur(.5px);opacity:.8"></div>
<div class="a" style="left:28.5px;top:523.1px;width:100px;height:1.4px;background:#b9b8c8;filter:blur(.5px);opacity:.8"></div>
<div class="a" style="left:28.5px;top:525.7px;width:60px;height:1.4px;background:#b9b8c8;filter:blur(.5px);opacity:.8"></div>
<div class="a" style="left:28.5px;top:531.8px;width:42px;height:1.3px;background:#7d7c82;"></div>
<div class="a" style="left:28.5px;top:538.8px;width:100px;height:1.4px;background:#95a0c0;"></div>
<div class="a" style="left:51px;top:537px;width:5px;height:5px;background:#3d4fb6;border-radius:50%"></div>
<div class="a" style="left:103.3px;top:537px;width:5px;height:5px;background:#3d4fb6;border-radius:50%"></div>
<div class="a" style="left:31px;top:546.5px;width:19px;height:1.2px;background:#7d7c82;"></div>
<div class="a" style="left:82px;top:546.5px;width:20px;height:1.2px;background:#7d7c82;"></div>
<div class="a" style="left:31.5px;top:549.5px;width:42px;height:1.4px;background:#b3b2b8;filter:blur(.5px);opacity:.8"></div>
<div class="a" style="left:31.5px;top:552.1px;width:42px;height:1.4px;background:#b3b2b8;filter:blur(.5px);opacity:.8"></div>
<div class="a" style="left:31.5px;top:554.7px;width:42px;height:1.4px;background:#b3b2b8;filter:blur(.5px);opacity:.8"></div>
<div class="a" style="left:82px;top:549.5px;width:46px;height:1.4px;background:#b3b2b8;filter:blur(.5px);opacity:.8"></div>
<div class="a" style="left:82px;top:552.1px;width:46px;height:1.4px;background:#b3b2b8;filter:blur(.5px);opacity:.8"></div>
<div class="a" style="left:82px;top:554.7px;width:30px;height:1.4px;background:#b3b2b8;filter:blur(.5px);opacity:.8"></div>
<div class="a" style="left:28.5px;top:560.5px;width:50px;height:1.4px;background:#b3b2b8;filter:blur(.5px);opacity:.8"></div>
<div class="a" style="left:28.5px;top:563.1px;width:50px;height:1.4px;background:#b3b2b8;filter:blur(.5px);opacity:.8"></div>
<div class="a" style="left:28.5px;top:565.7px;width:50px;height:1.4px;background:#b3b2b8;filter:blur(.5px);opacity:.8"></div>
<div class="a" style="left:28.5px;top:568.3px;width:35px;height:1.4px;background:#b3b2b8;filter:blur(.5px);opacity:.8"></div>
<div class="a" style="left:24px;top:601.2px;width:110.5px;height:98.8px;background:#faf9fd;border-radius:3px"></div>
<div class="t" style="left:28.50px;top:609.79px;font-size:5.2px;color:#3a3a3e;transform:scaleX(0.6549);">Seven Golden Rules for Detailed Text Analysis</div>
<div class="a" style="left:28.5px;top:621.5px;width:103px;height:1.4px;background:#b3b2b8;filter:blur(.5px);opacity:.8"></div>
<div class="a" style="left:28.5px;top:624.3px;width:103px;height:1.4px;background:#b3b2b8;filter:blur(.5px);opacity:.8"></div>
<div class="a" style="left:28.5px;top:627.1px;width:20px;height:1.4px;background:#b3b2b8;filter:blur(.5px);opacity:.8"></div>
<div class="a" style="left:28.3px;top:632px;width:103.2px;height:48px;background:#d8dcf3;"></div>
<div class="a" style="left:29.5px;top:635px;width:26px;height:1.3px;background:#6b6c86;"></div>
<div class="a" style="left:29.5px;top:639px;width:30px;height:1.4px;background:#9fa2c0;filter:blur(.5px);opacity:.8"></div>
<div class="a" style="left:29.5px;top:642px;width:30px;height:1.4px;background:#9fa2c0;filter:blur(.5px);opacity:.8"></div>
<div class="a" style="left:29.5px;top:645px;width:20px;height:1.4px;background:#9fa2c0;filter:blur(.5px);opacity:.8"></div>
<div class="a" style="left:29.5px;top:652.5px;width:26px;height:1.3px;background:#6b6c86;"></div>
<div class="a" style="left:29.5px;top:656.5px;width:30px;height:1.4px;background:#9fa2c0;filter:blur(.5px);opacity:.8"></div>
<div class="a" style="left:29.5px;top:659.5px;width:30px;height:1.4px;background:#9fa2c0;filter:blur(.5px);opacity:.8"></div>
<div class="a" style="left:29.5px;top:662.5px;width:20px;height:1.4px;background:#9fa2c0;filter:blur(.5px);opacity:.8"></div>
<div class="a" style="left:65.5px;top:635px;width:26px;height:1.3px;background:#6b6c86;"></div>
<div class="a" style="left:65.5px;top:639px;width:30px;height:1.4px;background:#9fa2c0;filter:blur(.5px);opacity:.8"></div>
<div class="a" style="left:65.5px;top:642px;width:30px;height:1.4px;background:#9fa2c0;filter:blur(.5px);opacity:.8"></div>
<div class="a" style="left:65.5px;top:645px;width:20px;height:1.4px;background:#9fa2c0;filter:blur(.5px);opacity:.8"></div>
<div class="a" style="left:65.5px;top:652.5px;width:26px;height:1.3px;background:#6b6c86;"></div>
<div class="a" style="left:65.5px;top:656.5px;width:30px;height:1.4px;background:#9fa2c0;filter:blur(.5px);opacity:.8"></div>
<div class="a" style="left:65.5px;top:659.5px;width:30px;height:1.4px;background:#9fa2c0;filter:blur(.5px);opacity:.8"></div>
<div class="a" style="left:65.5px;top:662.5px;width:20px;height:1.4px;background:#9fa2c0;filter:blur(.5px);opacity:.8"></div>
<div class="a" style="left:99.5px;top:635px;width:26px;height:1.3px;background:#6b6c86;"></div>
<div class="a" style="left:99.5px;top:639px;width:30px;height:1.4px;background:#9fa2c0;filter:blur(.5px);opacity:.8"></div>
<div class="a" style="left:99.5px;top:642px;width:30px;height:1.4px;background:#9fa2c0;filter:blur(.5px);opacity:.8"></div>
<div class="a" style="left:99.5px;top:645px;width:20px;height:1.4px;background:#9fa2c0;filter:blur(.5px);opacity:.8"></div>
<div class="a" style="left:99.5px;top:652.5px;width:26px;height:1.3px;background:#6b6c86;"></div>
<div class="a" style="left:99.5px;top:656.5px;width:30px;height:1.4px;background:#9fa2c0;filter:blur(.5px);opacity:.8"></div>
<div class="a" style="left:99.5px;top:659.5px;width:30px;height:1.4px;background:#9fa2c0;filter:blur(.5px);opacity:.8"></div>
<div class="a" style="left:99.5px;top:662.5px;width:20px;height:1.4px;background:#9fa2c0;filter:blur(.5px);opacity:.8"></div>
<div class="a" style="left:29.5px;top:670.5px;width:28px;height:1.3px;background:#6b6c86;"></div>
<div class="a" style="left:29.5px;top:675px;width:75px;height:1px;background:#9fa2c0;"></div>
<div class="a" style="left:28.5px;top:683px;width:103px;height:1.4px;background:#b3b2b8;filter:blur(.5px);opacity:.8"></div>
<div class="a" style="left:28.5px;top:686px;width:103px;height:1.4px;background:#b3b2b8;filter:blur(.5px);opacity:.8"></div>
<div class="a" style="left:28.5px;top:689px;width:22px;height:1.4px;background:#b3b2b8;filter:blur(.5px);opacity:.8"></div>
<div class="a" style="left:24px;top:718.3px;width:110.5px;height:22px;background:#faf9fd;border-radius:3px 3px 0 0"></div>
<div class="t" style="left:28.50px;top:720.64px;font-size:4.6px;color:#3a3a3e;transform:scaleX(0.5559);">The Text Processing Algorithm: Five Essential Steps</div>
<div class="a" style="left:28.5px;top:729.5px;width:100px;height:1.4px;background:#b3b2b8;filter:blur(.5px);opacity:.8"></div>
<div class="a" style="left:28.5px;top:732.0px;width:60px;height:1.4px;background:#b3b2b8;filter:blur(.5px);opacity:.8"></div>
<div class="a" style="left:29px;top:734.5px;width:5px;height:4px;background:#c9c8ce;"></div>
<div class="a" style="left:36px;top:736px;width:18px;height:1px;background:#9a999e;"></div>
<div class="a" style="left:6px;top:741px;width:703px;height:20.5px;background:#e9e7e6;border-radius:0 0 5px 5px;border-top:1px solid #d8d6d5"></div>
<div class="t" style="left:19.00px;top:746.45px;font-size:10px;color:#6f6e71;transform:scaleX(0.6898);">Слайд 2 из 10</div>
<div class="t" style="left:76.00px;top:746.45px;font-size:10px;color:#6f6e71;transform:scaleX(0.7322);">русский (Казахстан)</div>
<svg class="a" style="left:154px;top:745.5px;" width="11" height="13" viewBox="0 0 11 13" fill="none"><circle cx="5.5" cy="2.5" r="1.6" stroke="#777" stroke-width="1"/><path d="M1 5 H10 M5.5 5 V8.5 L2.5 12 M5.5 8.5 L8.5 12" stroke="#777" stroke-width="1"/></svg>
<div class="t" style="left:167.00px;top:746.45px;font-size:10px;color:#6f6e71;transform:scaleX(0.7577);">Специальные возможности: проверьте рекомендации</div>
<svg class="a" style="left:384px;top:745.5px;" width="9" height="12" viewBox="0 0 9 12" fill="none"><path d="M4.5 1 V4 M3 2.5 L4.5 1 L6 2.5 M1 6 H8 M1 8.5 H8 M1 11 H8" stroke="#7a797c" stroke-width="1"/></svg>
<div class="t" style="left:396.00px;top:746.45px;font-size:10px;color:#6f6e71;transform:scaleX(0.7190);">Заметки</div>
<svg class="a" style="left:434px;top:746.5px;" width="9" height="10" viewBox="0 0 9 10" fill="none"><path d="M0.5 0.5 H8.5 V6.5 H4 L1.5 9 V6.5 H0.5 Z" fill="#5f5e61"/></svg>
<div class="t" style="left:445.00px;top:746.45px;font-size:10px;color:#6f6e71;transform:scaleX(0.7361);">Примечания</div>
<div class="a" style="left:494px;top:745.5px;width:17.5px;height:13px;background:#cfcdcf;border-radius:2px"></div>
<svg class="a" style="left:497px;top:746.5px;" width="11" height="11" viewBox="0 0 11 11" fill="none"><rect x="1" y="1" width="9" height="9" stroke="#666" stroke-width="1"/><path d="M1 4 H10" stroke="#666"/></svg>
<svg class="a" style="left:519px;top:746.5px;" width="10" height="10" viewBox="0 0 10 10" fill="none"><rect x="0.5" y="0.5" width="4" height="4" fill="#6f6e71"/><rect x="5.5" y="0.5" width="4" height="4" fill="#6f6e71"/><rect x="0.5" y="5.5" width="4" height="4" fill="#6f6e71"/><rect x="5.5" y="5.5" width="4" height="4" fill="#6f6e71"/></svg>
<svg class="a" style="left:538.5px;top:745.5px;" width="10" height="12" viewBox="0 0 10 12" fill="none"><rect x="0.5" y="0.5" width="9" height="11" stroke="#7a797c" stroke-width="1"/><path d="M5 0.5 V11.5" stroke="#7a797c"/><path d="M2 3 H4 M2 5 H4 M2 7 H4 M6 3 H8 M6 5 H8 M6 7 H8" stroke="#9a999c" stroke-width=".8"/></svg>
<svg class="a" style="left:558.5px;top:745.5px;" width="10" height="12" viewBox="0 0 10 12" fill="none"><rect x="0.5" y="1" width="9" height="7" stroke="#6f6e71" stroke-width="1.1"/><path d="M5 8 V11 M3 11 H7" stroke="#6f6e71" stroke-width="1"/><path d="M3.5 3 L6.5 4.5 L3.5 6 Z" fill="#6f6e71"/></svg>
<div class="a" style="left:578.5px;top:751.5px;width:4px;height:1.5px;background:#555;"></div>
<div class="a" style="left:587px;top:751.0px;width:56px;height:2px;background:#9a999c;border-radius:1px"></div>
<div class="a" style="left:605.5px;top:746.5px;width:10.5px;height:10.5px;background:#fbfbfb;border-radius:50%;box-shadow:0 0 1.5px rgba(0,0,0,.35)"></div>
<svg class="a" style="left:646px;top:747.5px;" width="7" height="8" viewBox="0 0 7 8" fill="none"><path d="M3.5 0.5 V7.5 M0 4 H7" stroke="#555" stroke-width="1.3"/></svg>
<div class="t" style="left:661.50px;top:746.45px;font-size:10px;color:#6f6e71;transform:scaleX(0.7494);">83%</div>
<svg class="a" style="left:688px;top:745.5px;" width="9" height="13" viewBox="0 0 9 13" fill="none"><rect x="0.5" y="0.5" width="8" height="12" stroke="#8a898c" stroke-width=".9"/><path d="M2 4 L4.5 2 L7 4 M2 9 L4.5 11 L7 9" stroke="#8a898c" stroke-width=".8"/></svg>
<div class="a" style="left:12px;top:681px;width:15px;height:24px;background:#1b2a24;border-radius:50%"></div>
<svg class="a" style="left:14px;top:685px;" width="12" height="16" viewBox="0 0 12 16" fill="none"><path d="M8.5 2 L10.5 4 L4.5 12 L2 13 L2.5 10.5 Z" stroke="#2eaa68" stroke-width="1.3"/><path d="M2 14.5 H10" stroke="#2eaa68" stroke-width="1"/></svg>
<svg class="a" style="left:31px;top:653px;" width="9" height="14" viewBox="0 0 9 14" fill="none"><path d="M1 1 V11 L3.5 8.5 L5.5 13 L7 12.3 L5 8 H8.5 Z" fill="#111" stroke="#eee" stroke-width=".7"/></svg>
<div class="a" style="left:251px;top:680px;width:110px;height:74px;background:#232323;border-radius:2px"></div>
<svg class="a" style="left:301px;top:753px;" width="10" height="6" viewBox="0 0 10 6" fill="none"><path d="M0 0 H10 L5 5 Z" fill="#232323"/></svg>
<div class="a" style="left:258px;top:692px;width:13.5px;height:21px;background:#d6601d;border-radius:4px"></div>
<div class="t" style="left:261.50px;top:696.95px;font-size:10px;color:#fff;font-weight:bold;transform:scaleX(0.9922);">п</div>
<svg class="a" style="left:351px;top:685px;" width="7" height="7" viewBox="0 0 7 7" fill="none"><path d="M1 1 L6 6 M6 1 L1 6" stroke="#8c8c8c" stroke-width="1"/></svg>
<div class="t" style="left:279.00px;top:693.40px;font-size:9.5px;color:#ffffff;font-weight:bold;transform:scaleX(0.6332);">От Пользователь Zoom</div>
<div class="t" style="left:279.00px;top:705.90px;font-size:9.5px;color:#d8d8d8;transform:scaleX(0.6972);">всем</div>
<div class="t" style="left:278.00px;top:729.40px;font-size:9.5px;color:#e8e8e8;transform:scaleX(0.6480);">камера косындар</div>
<div class="a" style="left:0px;top:762px;width:898px;height:43px;background:#010101;"></div>
<svg class="a" style="left:18px;top:768px;" width="12" height="20" viewBox="0 0 12 20" fill="none"><rect x="3.5" y="1.3" width="5" height="13" rx="2.5" stroke="#e8e8e8" stroke-width="1.1"/><path d="M4 8.5 H8 V11.5 A2 2 0 0 1 4 11.5 Z" fill="#3aa66f"/><path d="M1.5 9.5 A4.5 4.5 0 0 0 10.5 9.5" stroke="#e0e0e0" stroke-width="1"/><path d="M6 14.5 V18 M2.5 18.3 H9.5" stroke="#e0e0e0" stroke-width="1.2"/></svg>
<svg class="a" style="left:37.5px;top:776.5px;" width="6" height="4" viewBox="0 0 6 4" fill="none"><path d="M0.8 3.2 L3 1 L5.2 3.2" stroke="#d8d8d8" stroke-width="1"/></svg>
<div class="t" style="left:18.40px;top:790.36px;font-size:9px;color:#ededed;transform:scaleX(0.6606);">Звук</div>
<svg class="a" style="left:61px;top:772px;" width="15" height="12" viewBox="0 0 15 12" fill="none"><rect x="1" y="1" width="9" height="10" rx="2.5" stroke="#ececec" stroke-width="1.3"/><path d="M10 4.5 L13.5 2 V10 L10 7.5" stroke="#ececec" stroke-width="1.3"/></svg>
<svg class="a" style="left:83.5px;top:776.5px;" width="6" height="4" viewBox="0 0 6 4" fill="none"><path d="M0.8 3.2 L3 1 L5.2 3.2" stroke="#d8d8d8" stroke-width="1"/></svg>
<div class="t" style="left:60.00px;top:790.36px;font-size:9px;color:#ededed;transform:scaleX(0.6198);">Видео</div>
<svg class="a" style="left:248px;top:769px;" width="14" height="16" viewBox="0 0 14 16" fill="none"><circle cx="4" cy="3.5" r="2.3" stroke="#eee" stroke-width="1.1"/><path d="M1 10 A3 3 0 0 1 7 10 V11 H1 Z" stroke="#eee" stroke-width="1.1"/><circle cx="9" cy="7.5" r="2.3" stroke="#eee" stroke-width="1.1"/><path d="M6 14.5 A3 3 0 0 1 12 14.5 V15 H6 Z" stroke="#eee" stroke-width="1.1"/></svg>
<div class="t" style="left:263.00px;top:769.66px;font-size:7px;color:#cfcfcf;transform:scaleX(0.8960);">8</div>
<svg class="a" style="left:277px;top:776.5px;" width="6" height="4" viewBox="0 0 6 4" fill="none"><path d="M0.8 3.2 L3 1 L5.2 3.2" stroke="#d8d8d8" stroke-width="1"/></svg>
<div class="t" style="left:241.00px;top:790.36px;font-size:9px;color:#ededed;transform:scaleX(0.6349);">Участники</div>
<svg class="a" style="left:298px;top:769px;" width="14" height="16" viewBox="0 0 14 16" fill="none"><path d="M2 3 H11 A1.5 1.5 0 0 1 12.5 4.5 V11 A1.5 1.5 0 0 1 11 12.5 H5 L2.5 15 V12.5 A1.5 1.5 0 0 1 1 11 V4.5 A1.5 1.5 0 0 1 2 3 Z" stroke="#eee" stroke-width="1.2"/><path d="M4 7 H9 M4 9.5 H8" stroke="#eee" stroke-width="1"/></svg>
<div class="a" style="left:307px;top:766.5px;width:9px;height:9px;background:#e5484d;border-radius:50%"></div>
<div class="t" style="left:309.50px;top:767.62px;font-size:6.5px;color:#fff;font-weight:bold;transform:scaleX(0.8276);">1</div>
<svg class="a" style="left:319px;top:776.5px;" width="6" height="4" viewBox="0 0 6 4" fill="none"><path d="M0.8 3.2 L3 1 L5.2 3.2" stroke="#d8d8d8" stroke-width="1"/></svg>
<div class="t" style="left:301.50px;top:790.36px;font-size:9px;color:#ededed;transform:scaleX(0.6360);">Чат</div>
<svg class="a" style="left:342px;top:769px;" width="15" height="15" viewBox="0 0 15 15" fill="none"><path d="M7.5 13.5 L2 8 A3.2 3.2 0 0 1 7.5 3 A3.2 3.2 0 0 1 13 8 Z" stroke="#eee" stroke-width="1.2"/></svg>
<svg class="a" style="left:365px;top:776.5px;" width="6" height="4" viewBox="0 0 6 4" fill="none"><path d="M0.8 3.2 L3 1 L5.2 3.2" stroke="#d8d8d8" stroke-width="1"/></svg>
<div class="t" style="left:330.00px;top:790.36px;font-size:9px;color:#ededed;transform:scaleX(0.6325);">Отреагировать</div>
<div class="a" style="left:390.5px;top:771px;width:11px;height:14px;background:#27c15f;border-radius:2px"></div>
<svg class="a" style="left:392px;top:773px;" width="8" height="10" viewBox="0 0 8 10" fill="none"><path d="M4 8.5 V2 M1.5 4.5 L4 2 L6.5 4.5" stroke="#0a2a14" stroke-width="1.4"/></svg>
<div class="t" style="left:381.00px;top:790.36px;font-size:9px;color:#ededed;transform:scaleX(0.6237);">Поделиться</div>
<svg class="a" style="left:433px;top:769px;" width="13" height="16" viewBox="0 0 13 16" fill="none"><path d="M1 5 V3 A2 2 0 0 1 3 1 H5 M8 1 H10 A2 2 0 0 1 12 3 V5 M1 10 V12 A2 2 0 0 1 3 14 H5" stroke="#eee" stroke-width="1.2"/><circle cx="9.5" cy="11.5" r="2.3" stroke="#eee" stroke-width="1.2"/></svg>
<div class="t" style="left:422.80px;top:790.36px;font-size:9px;color:#ededed;transform:scaleX(0.6495);">Приложения</div>
<svg class="a" style="left:481px;top:770px;" width="14" height="15" viewBox="0 0 14 15" fill="none"><rect x="1" y="1" width="11" height="12" rx="1.5" stroke="#eee" stroke-width="1.2"/><rect x="6" y="10" width="7" height="4" rx="1" fill="#eee"/></svg>
<div class="t" style="left:464.00px;top:790.36px;font-size:9px;color:#ededed;transform:scaleX(0.6597);">Доски сообщений</div>
<svg class="a" style="left:528px;top:770px;" width="13" height="14" viewBox="0 0 13 14" fill="none"><circle cx="6.5" cy="7" r="5.5" stroke="#eee" stroke-width="1.2"/><circle cx="6.5" cy="7" r="2.7" fill="#eee"/></svg>
<div class="t" style="left:525.00px;top:790.36px;font-size:9px;color:#ededed;transform:scaleX(0.6434);">Запись</div>
<svg class="a" style="left:566px;top:770px;" width="12" height="16" viewBox="0 0 12 16" fill="none"><path d="M1 1 H8 L11 4 V15 H1 Z" stroke="#eee" stroke-width="1.2"/><path d="M3.5 6.5 H8 M3.5 9 H8 M3.5 11.5 H8" stroke="#eee" stroke-width="1"/></svg>
<div class="t" style="left:557.00px;top:790.36px;font-size:9px;color:#ededed;transform:scaleX(0.6529);">Документы</div>
<svg class="a" style="left:624px;top:770px;" width="14" height="15" viewBox="0 0 14 15" fill="none"><circle cx="7" cy="7.5" r="6" stroke="#eee" stroke-width="1.2"/><path d="M7 6.5 V11" stroke="#eee" stroke-width="1.4"/><circle cx="7" cy="4.3" r=".9" fill="#eee"/></svg>
<div class="t" style="left:593.70px;top:790.36px;font-size:9px;color:#ededed;transform:scaleX(0.6325);">Информация о конференции</div>
<svg class="a" style="left:691px;top:770px;" width="14" height="15" viewBox="0 0 14 15" fill="none"><circle cx="7" cy="7.5" r="6" stroke="#eee" stroke-width="1.2"/><circle cx="4.3" cy="7.5" r=".9" fill="#eee"/><circle cx="7" cy="7.5" r=".9" fill="#eee"/><circle cx="9.7" cy="7.5" r=".9" fill="#eee"/></svg>
<div class="t" style="left:677.80px;top:790.36px;font-size:9px;color:#ededed;transform:scaleX(0.6514);">Дополнительно</div>
<svg class="a" style="left:868px;top:768px;" width="16" height="19" viewBox="0 0 16 19" fill="none"><path d="M8.5 2 L13.5 1 V16.5 L8.5 17.5" stroke="#e0434a" stroke-width="1.4"/><path d="M11 2 V16" stroke="#b0303a" stroke-width="1"/><circle cx="6.5" cy="4" r="1.5" fill="#f0f0f0"/><path d="M6 6.5 L4.5 11 L2.5 16 M5 10.5 L7.5 12.5 L7.5 16.5 M5.5 7.5 L8.5 9 M5.5 7.5 L3 9.5" stroke="#f0f0f0" stroke-width="1.3"/></svg>
<div class="t" style="left:867.00px;top:790.36px;font-size:9px;color:#ededed;transform:scaleX(0.6377);">Выйти</div>
<div class="a" style="left:762.5px;top:79.5px;width:90.5px;height:79px;border-radius:5px 5px 0 0;overflow:hidden;background:linear-gradient(180deg,#5f8bd0 0%,#86a6d6 55%,#b6c4d8 100%)"><div class="a" style="left:30px;top:12px;width:27px;height:30px;border-radius:48% 48% 30% 30%;background:#4a3832;filter:blur(1.2px)"></div><div class="a" style="left:32px;top:25px;width:23px;height:35px;border-radius:35% 35% 48% 48%;background:#d6b4a2;filter:blur(1px)"></div><div class="a" style="left:34px;top:27px;width:19px;height:4px;background:#5a4238;filter:blur(1px);opacity:.7"></div><div class="a" style="left:22px;top:57.5px;width:55px;height:26px;border-radius:45% 45% 0 0;background:#2c2527;filter:blur(.8px)"></div><div class="a" style="left:37px;top:56px;width:14px;height:7px;background:#8a3b36;border-radius:50%;filter:blur(1px)"></div></div>
<div class="a" style="left:764px;top:144.4px;width:64px;height:13.5px;background:rgba(22,22,22,.6);border-radius:2px"></div>
<svg class="a" style="left:766px;top:146.4px;" width="8" height="10" viewBox="0 0 8 10" fill="none"><path d="M2 1 H6 V5 L7 7 H1 L2 5 Z M4 7 V10" fill="#eee" stroke="#eee" stroke-width=".6"/></svg>
<div class="t" style="left:773.50px;top:146.30px;font-size:9.5px;color:#f2f2f2;transform:scaleX(0.6308);">Almash Seidikenova</div>
<div class="a" style="left:762px;top:158.5px;width:91px;height:83px;overflow:hidden;background:linear-gradient(200deg,#d3d9e0 0%,#c6cdd5 60%,#c2c9d0 100%);border:1.8px solid #46d696"><div class="a" style="left:11px;top:0px;width:14.6px;height:9px;background:#8fb3cc;border:1.5px solid #263244;filter:blur(.4px)"></div><div class="a" style="left:32.4px;top:13px;width:26px;height:75px;border-radius:48% 48% 12% 12%;background:#1d1714;filter:blur(.8px)"></div><div class="a" style="left:35.2px;top:19.6px;width:18.3px;height:38px;border-radius:40% 40% 50% 50%;background:#d6b5a1;filter:blur(.9px)"></div><div class="a" style="left:49px;top:55px;width:32px;height:32px;border-radius:40% 30% 0 0;background:#6f5a27;filter:blur(.8px)"></div></div>
<div class="a" style="left:764px;top:224px;width:48.6px;height:13.5px;background:rgba(22,22,22,.6);border-radius:2px"></div>
<div class="t" style="left:765.50px;top:225.90px;font-size:9.5px;color:#f2f2f2;transform:scaleX(0.6311);">Guldana Turabay</div>
<div class="a" style="left:762.5px;top:241px;width:90.5px;height:401.5px;background:#262626;"></div>
<div class="a" style="left:793px;top:241px;width:29px;height:80px;overflow:hidden;background:linear-gradient(180deg,#a9a9a7 0%,#c9c8c6 30%,#8f8d8b 100%)"><div class="a" style="left:11px;top:12px;width:9px;height:9px;border-radius:50%;background:#f2f2f0;filter:blur(2px)"></div><div class="a" style="left:0px;top:36px;width:14px;height:24px;border-radius:45%;background:#3a2d28;filter:blur(.9px)"></div><div class="a" style="left:2px;top:40px;width:10px;height:16px;border-radius:45%;background:#c9a790;filter:blur(.9px)"></div><div class="a" style="left:15px;top:33px;width:14px;height:26px;border-radius:45%;background:#2c221f;filter:blur(.9px)"></div><div class="a" style="left:17px;top:37px;width:10px;height:17px;border-radius:45%;background:#d2ae96;filter:blur(.9px)"></div><div class="a" style="left:0px;top:60px;width:29px;height:20px;background:#3b332c;filter:blur(.9px)"></div></div>
<div class="a" style="left:764.5px;top:306.5px;width:59px;height:13.5px;background:rgba(22,22,22,.6);border-radius:2px"></div>
<svg class="a" style="left:766.0px;top:308.0px;" width="8" height="11" viewBox="0 0 8 11" fill="none"><rect x="2.5" y="0.5" width="3.5" height="6.5" rx="1.7" fill="#e24a45"/><path d="M1.3 5.5 A3 3 0 0 0 7.2 5.5 M4.2 8.5 V10.3 M2.5 10.3 H6" stroke="#e24a45" stroke-width="1"/><path d="M0.8 10.5 L7.5 0.8" stroke="#e24a45" stroke-width="1.1"/></svg>
<div class="t" style="left:773.50px;top:308.40px;font-size:9.5px;color:#f2f2f2;transform:scaleX(0.6660);">Аружан Асетьсы</div>
<div class="a" style="left:793px;top:321px;width:29px;height:80.5px;overflow:hidden;background:linear-gradient(180deg,#cdbfae 0%,#c9beb2 45%,#bdb3a8 100%)"><div class="a" style="left:5px;top:4px;width:20px;height:24px;border-radius:48% 48% 30% 30%;background:#2a1f1c;filter:blur(1px)"></div><div class="a" style="left:6px;top:10px;width:18px;height:35px;border-radius:35% 35% 50% 50%;background:#dcc0aa;filter:blur(1px)"></div><div class="a" style="left:-2px;top:45px;width:33px;height:40px;background:#1c1b1c;border-radius:35% 35% 0 0;filter:blur(.9px)"></div><div class="a" style="left:10px;top:60px;width:9px;height:14px;background:#777;filter:blur(1.5px);opacity:.6"></div></div>
<div class="a" style="left:764.5px;top:386.5px;width:28px;height:13.5px;background:rgba(22,22,22,.6);border-radius:2px"></div>
<svg class="a" style="left:766.0px;top:388.0px;" width="8" height="11" viewBox="0 0 8 11" fill="none"><rect x="2.5" y="0.5" width="3.5" height="6.5" rx="1.7" fill="#e24a45"/><path d="M1.3 5.5 A3 3 0 0 0 7.2 5.5 M4.2 8.5 V10.3 M2.5 10.3 H6" stroke="#e24a45" stroke-width="1"/><path d="M0.8 10.5 L7.5 0.8" stroke="#e24a45" stroke-width="1.1"/></svg>
<div class="t" style="left:773.50px;top:388.40px;font-size:9.5px;color:#f2f2f2;transform:scaleX(0.6366);">Zhanel</div>
<div class="a" style="left:793px;top:401.5px;width:29px;height:80.5px;overflow:hidden;background:linear-gradient(180deg,#5e5752 0%,#7f766e 35%,#9a9088 70%,#6f655e 100%)"><div class="a" style="left:10px;top:54px;width:19px;height:30px;border-radius:45%;background:#3a2b28;filter:blur(1px)"></div><div class="a" style="left:13px;top:62px;width:13px;height:20px;border-radius:45%;background:#a88a78;filter:blur(1px);opacity:.7"></div></div>
<div class="a" style="left:764.5px;top:468.7px;width:59.5px;height:13.5px;background:rgba(22,22,22,.6);border-radius:2px"></div>
<div class="t" style="left:766.00px;top:470.60px;font-size:9.5px;color:#f2f2f2;transform:scaleX(0.6435);">Пользователь Zoom</div>
<div class="a" style="left:788.5px;top:482px;width:38.5px;height:80px;overflow:hidden;background:linear-gradient(180deg,#e1e1e0 0%,#ececeb 60%,#d6d6d6 100%)"><div class="a" style="left:4px;top:4px;width:27px;height:30px;border-radius:48% 48% 30% 30%;background:#3d302b;filter:blur(1px)"></div><div class="a" style="left:5px;top:14px;width:23px;height:46px;border-radius:35% 35% 50% 50%;background:#d6b6a2;filter:blur(1px)"></div><div class="a" style="left:6px;top:14px;width:21px;height:6px;background:#4a3a33;filter:blur(1.2px)"></div><div class="a" style="left:-2px;top:57px;width:36px;height:26px;background:#1d1d1e;border-radius:35% 35% 0 0;filter:blur(.9px)"></div></div>
<div class="a" style="left:764.5px;top:548px;width:63px;height:13.5px;background:rgba(22,22,22,.6);border-radius:2px"></div>
<svg class="a" style="left:766.0px;top:549.5px;" width="8" height="11" viewBox="0 0 8 11" fill="none"><rect x="2.5" y="0.5" width="3.5" height="6.5" rx="1.7" fill="#e24a45"/><path d="M1.3 5.5 A3 3 0 0 0 7.2 5.5 M4.2 8.5 V10.3 M2.5 10.3 H6" stroke="#e24a45" stroke-width="1"/><path d="M0.8 10.5 L7.5 0.8" stroke="#e24a45" stroke-width="1.1"/></svg>
<div class="t" style="left:773.50px;top:549.90px;font-size:9.5px;color:#f2f2f2;transform:scaleX(0.6292);">Zhelgeldina Aiaulym</div>
<div class="a" style="left:793px;top:562px;width:29px;height:80.5px;overflow:hidden;background:linear-gradient(180deg,#9a9b9b 0%,#b9b8b6 40%,#8c8b89 100%)"><div class="a" style="left:6px;top:3px;width:10px;height:5px;border-radius:50%;background:#f4f4f2;filter:blur(1.5px)"></div><div class="a" style="left:7px;top:16px;width:16px;height:22px;border-radius:45%;background:#2f2a28;filter:blur(.9px)"></div><div class="a" style="left:8px;top:21px;width:14px;height:18px;border-radius:40% 40% 50% 50%;background:#cfb09c;filter:blur(.9px)"></div><div class="a" style="left:8px;top:26px;width:14px;height:2px;background:#333;filter:blur(.9px)"></div><div class="a" style="left:0px;top:42px;width:29px;height:40px;background:#1d1d1e;border-radius:35% 35% 0 0;filter:blur(.9px)"></div></div>
<div class="a" style="left:764.5px;top:628px;width:58px;height:13.5px;background:rgba(22,22,22,.6);border-radius:2px"></div>
<svg class="a" style="left:766.0px;top:629.5px;" width="8" height="11" viewBox="0 0 8 11" fill="none"><rect x="2.5" y="0.5" width="3.5" height="6.5" rx="1.7" fill="#e24a45"/><path d="M1.3 5.5 A3 3 0 0 0 7.2 5.5 M4.2 8.5 V10.3 M2.5 10.3 H6" stroke="#e24a45" stroke-width="1"/><path d="M0.8 10.5 L7.5 0.8" stroke="#e24a45" stroke-width="1.1"/></svg>
<div class="t" style="left:774.00px;top:629.90px;font-size:9.5px;color:#f2f2f2;transform:scaleX(0.6642);">iPhone (Тима)☺</div>
<div class="t" style="left:793.75px;top:677.95px;font-size:10px;color:#f3f3f3;font-weight:bold;transform:scaleX(0.7023);">kamshat</div>
<div class="a" style="left:764px;top:708.7px;width:34px;height:13.5px;background:rgba(22,22,22,.6);border-radius:2px"></div>
<svg class="a" style="left:765.5px;top:710.2px;" width="8" height="11" viewBox="0 0 8 11" fill="none"><rect x="2.5" y="0.5" width="3.5" height="6.5" rx="1.7" fill="#e24a45"/><path d="M1.3 5.5 A3 3 0 0 0 7.2 5.5 M4.2 8.5 V10.3 M2.5 10.3 H6" stroke="#e24a45" stroke-width="1"/><path d="M0.8 10.5 L7.5 0.8" stroke="#e24a45" stroke-width="1.1"/></svg>
<div class="t" style="left:774.00px;top:710.60px;font-size:9.5px;color:#f2f2f2;transform:scaleX(0.6406);">kamshat</div>
</body></html>
